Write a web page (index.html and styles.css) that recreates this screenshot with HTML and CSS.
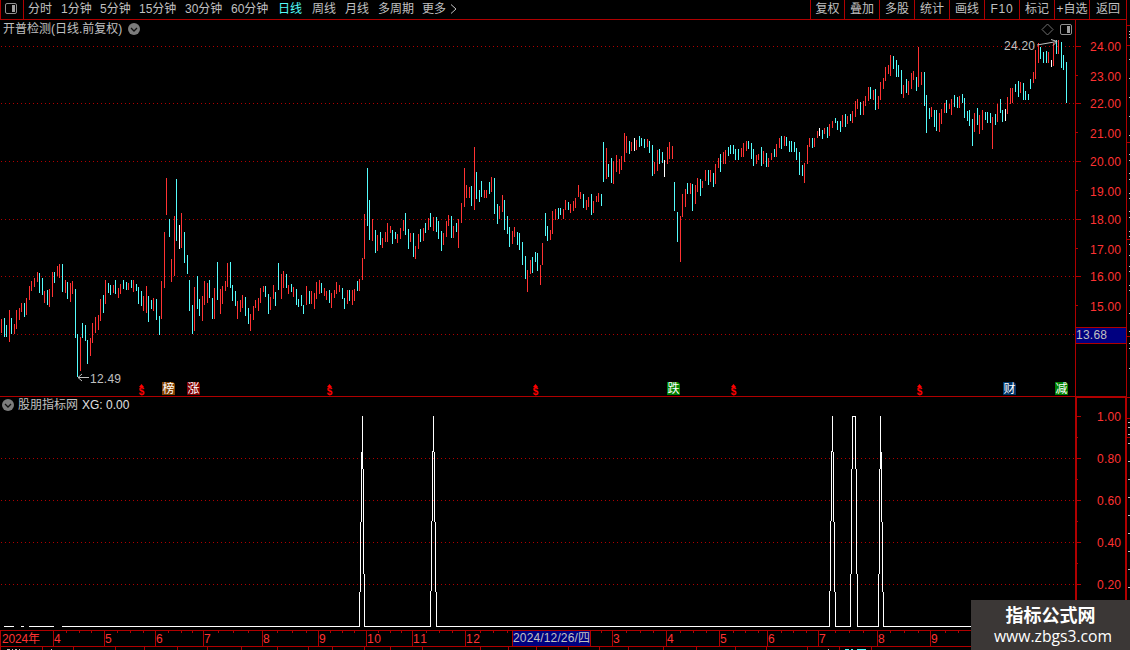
FILE: index.html
```html
<!DOCTYPE html>
<html lang="zh-CN">
<head>
    <meta charset="UTF-8">
    <meta name="viewport" content="width=device-width, initial-scale=1.0">
    <title>开普检测 日线</title>
    <link rel="stylesheet" href="styles.css">
</head>
<body>
    <div class="terminal">
        <div class="toolbar">
            <div class="layout-toggle">
                <svg width="12" height="11" viewBox="0 0 12 11">
                    <rect x="0.5" y="0.5" width="11" height="10" rx="1.5" fill="none" stroke="#909090"/>
                    <rect x="7" y="2" width="3" height="7" fill="#a0a0a0"/>
                </svg>
            </div>
            <div class="periods">
                <span>分时</span>
                <span>1分钟</span>
                <span>5分钟</span>
                <span>15分钟</span>
                <span>30分钟</span>
                <span>60分钟</span>
                <span class="active">日线</span>
                <span>周线</span>
                <span>月线</span>
                <span>多周期</span>
                <span class="more">更多<svg width="7" height="10" viewBox="0 0 7 10"><path d="M1 .5l5 4.5l-5 4.5" fill="none" stroke="#c0c0c0"/></svg></span>
            </div>
            <div class="tools">
                <span>复权</span>
                <span>叠加</span>
                <span>多股</span>
                <span>统计</span>
                <span>画线</span>
                <span class="latin">F10</span>
                <span>标记</span>
                <span>+自选</span>
                <span>返回</span>
            </div>
        </div>

        <div class="panel">
            <svg class="chart" id="price" width="1130" height="376" viewBox="0 20 1130 376"></svg>
            <div class="caption">
                <span>开普检测(日线.前复权)</span>
                <svg width="12" height="12" viewBox="0 0 12 12"><circle cx="6" cy="6" r="6" fill="#7c7c7c"/><path d="M3 5l3 3l3-3" fill="none" stroke="#111" stroke-width="1.3"/></svg>
            </div>
        </div>

        <div class="panel">
            <svg class="chart" id="signal" width="1130" height="234" viewBox="0 396 1130 234"></svg>
            <div class="caption indicator">
                <svg width="12" height="12" viewBox="0 0 12 12"><circle cx="6" cy="6" r="6" fill="#7c7c7c"/><path d="M3 5l3 3l3-3" fill="none" stroke="#111" stroke-width="1.3"/></svg>
                <span>股朋指标网</span>
                <span class="value">XG: 0.00</span>
            </div>
        </div>

        <svg class="chart" id="dates" width="1130" height="20" viewBox="0 630 1130 20"></svg>

        <div class="watermark">
            <div class="site">指标公式网</div>
            <div class="url">www.zbgs3.com</div>
        </div>
    </div>
    <script src="chart.js"></script>
</body>
</html>
```
FILE: styles.css
```css
body {
    margin: 0;
    background-color: #000;
    color: #c0c0c0;
    font-family: "Liberation Sans", "Noto Sans CJK SC", sans-serif;
    font-size: 12px;
    overflow: hidden;
}
.terminal {
    position: relative;
    width: 1130px;
    height: 650px;
    overflow: hidden;
}
.toolbar {
    display: flex;
    box-sizing: border-box;
    width: 1127px;
    height: 20px;
    border-bottom: 1px solid #b00000;
    border-right: 1px solid #b00000;
    line-height: 19px;
    white-space: nowrap;
}
.layout-toggle {
    display: flex;
    align-items: center;
    justify-content: center;
    box-sizing: border-box;
    width: 24px;
    padding: 0 2px 2px 0;
    border-left: 1px solid #b00000;
    border-right: 1px solid #b00000;
}
.periods {
    display: grid;
    grid-template-columns: 33px 39px 39px 46px 46px 47px 34px 33px 33px 44px 40px;
    padding-left: 4px;
    flex: 1;
}
.active {
    color: #54fcfc;
}
.more svg {
    margin-left: 4px;
    vertical-align: -1px;
}
.tools {
    display: grid;
    grid-template-columns: 34px repeat(7, 35px) 37px;
    text-align: center;
}
.tools span {
    border-left: 1px solid #b00000;
}
.latin {
    letter-spacing: 0.8px;
}
.panel {
    position: relative;
}
.chart {
    display: block;
}
.caption {
    position: absolute;
    left: 3px;
    top: 0;
    height: 18px;
    display: flex;
    align-items: center;
    gap: 6px;
    line-height: 16px;
}
.indicator {
    left: 2px;
    gap: 4px;
}
.value {
    color: #e0e0e0;
}
.grid {
    stroke: #b00000;
    stroke-dasharray: 1 3;
}
.frame {
    fill: none;
    stroke: #b00000;
}
.thick {
    stroke-width: 2;
}
.up {
    stroke: #ff3232;
}
.down {
    stroke: #54fcfc;
}
.flat {
    stroke: #fff;
}
.scraps {
    stroke: #c0c0c0;
}
.series {
    fill: none;
    stroke: #fff;
}
.pointer {
    fill: none;
    stroke: #c0c0c0;
}
.label {
    fill: #ff3232;
    font-size: 12px;
}
.note {
    fill: #c0c0c0;
    font-size: 12px;
}
.current {
    fill: #000080;
}
.badge-text {
    fill: #fff;
    font-size: 12px;
    text-anchor: middle;
}
.dollar {
    fill: #ff0000;
    font-size: 10px;
    font-weight: bold;
    text-anchor: middle;
}
.arrow {
    fill: #ff0000;
}
.watermark {
    position: absolute;
    left: 971px;
    top: 600px;
    box-sizing: border-box;
    width: 159px;
    height: 50px;
    padding-left: 5px;
    background-color: #3b3736;
    color: #fff;
    text-align: center;
}
.site {
    padding-right: 5px;
    font: bold 18px/27px "Noto Sans CJK SC", sans-serif;
    padding-top: 1px;
}
.url {
    font: 15.7px/16px "Open Sans", sans-serif;
}
```
FILE: chart.js
```js
// x, high, low of every bar in pixels
const up = `1 319 333,9 310 342,14 324 334,16 310 329,19 308 320,21 303 312,26 298 315,29 286 300,31 281 291,34 278 287,
37 272 282,44 291 303,49 289 307,52 272 297,57 266 276,59 264 278,65 280 293,70 283 302,72 281 294,80 337 371,
90 338 356,92 323 343,95 317 333,98 315 330,100 299 321,105 280 304,113 285 293,118 288 298,120 284 294,128 283 290,
133 280 292,143 296 311,146 286 313,153 298 311,161 281 319,164 232 288,166 178 215,171 259 282,174 216 276,181 213 248,
194 287 331,202 296 321,204 281 305,207 283 303,214 288 319,220 289 314,222 286 304,225 281 291,227 263 287,237 301 319,
240 300 312,242 295 308,250 314 331,253 306 320,255 300 308,258 298 311,260 288 303,263 286 292,270 297 310,273 285 299,
281 274 299,283 271 288,288 285 294,293 287 297,306 286 305,311 291 304,314 293 309,316 282 299,319 280 294,324 288 296,
326 291 300,331 293 308,334 290 298,336 282 294,339 285 292,347 290 304,352 290 305,354 289 301,359 279 291,362 258 280,
364 214 259,372 219 241,377 235 251,382 238 248,385 232 242,387 223 242,390 226 233,397 234 243,400 228 239,403 220 231,
410 233 242,415 246 259,418 234 249,423 228 241,428 218 230,433 217 231,443 233 245,446 221 237,448 215 226,453 226 238,
458 219 248,461 203 223,464 168 207,466 185 198,469 187 198,474 147 210,484 190 198,486 190 198,491 177 192,499 206 219,
502 195 212,512 231 244,514 227 237,527 270 292,530 260 274,540 265 285,542 243 265,550 230 240,552 211 234,555 209 220,
563 209 219,565 200 210,570 204 213,573 201 211,575 198 208,578 185 197,580 192 199,586 200 210,588 197 207,593 201 213,
596 196 202,598 193 202,606 148 179,613 161 184,616 155 172,619 159 174,621 156 170,624 133 162,626 136 153,631 142 151,
636 140 150,647 139 147,654 162 174,657 150 171,667 147 164,669 142 159,672 146 159,680 216 262,682 194 217,685 189 207,
690 183 194,695 185 204,697 178 192,702 181 188,705 170 181,710 170 182,715 164 184,718 158 168,723 152 164,725 150 164,
741 148 157,743 143 157,746 141 151,756 155 164,758 154 160,763 151 164,768 158 167,771 153 160,776 144 157,779 138 148,
784 136 146,804 163 183,807 145 164,809 138 147,814 138 147,817 131 138,824 128 134,829 124 136,832 121 128,842 115 127,
847 116 124,852 111 123,855 101 117,857 99 109,863 101 115,865 96 106,868 87 101,873 90 100,878 96 109,880 82 100,
883 78 89,885 67 81,888 65 74,890 55 76,903 85 98,908 81 95,911 73 89,913 71 80,918 47 87,921 72 85,931 107 117,
939 113 132,941 109 124,944 103 113,949 104 109,951 99 115,959 96 108,974 113 132,979 115 134,982 110 130,992 117 149,
997 104 122,1007 97 114,1010 88 104,1012 88 103,1020 82 93,1033 72 83,1035 50 79,1038 43 63,1048 52 63,1053 43 66,1058 40 54`;

const down = `4 318 337,6 325 337,11 318 334,24 303 317,39 273 293,42 278 295,47 290 305,54 272 283,62 264 292,67 282 299,
75 289 338,77 334 377,82 323 338,85 325 341,87 340 364,103 295 313,108 283 293,110 285 295,115 280 294,123 280 289,
126 282 290,131 280 288,136 284 291,138 287 304,141 291 306,148 296 322,151 300 309,156 299 320,159 316 335,169 219 237,
176 179 241,184 232 263,187 255 274,189 280 311,192 305 334,197 276 309,199 299 316,209 280 298,212 298 319,217 262 300,
230 262 288,232 285 301,235 291 306,245 297 316,248 308 324,265 286 297,268 294 314,275 292 306,278 263 290,286 274 288,
291 284 292,296 289 305,298 299 307,301 295 306,303 305 314,309 291 304,321 283 293,329 290 303,342 288 299,344 298 309,
349 290 301,357 281 291,367 168 226,369 200 240,375 230 253,380 232 245,392 230 244,395 232 239,405 213 235,408 229 249,
413 233 257,420 229 242,425 223 233,430 213 227,436 217 232,438 221 239,441 231 251,451 216 238,456 223 232,471 186 206,
476 172 199,479 190 202,481 181 197,489 182 194,494 178 214,497 204 224,504 200 230,507 216 234,509 227 247,517 232 245,
519 233 250,522 242 265,525 256 279,532 257 273,535 252 262,537 253 271,545 213 236,547 226 241,558 208 219,560 208 215,
568 202 210,583 194 208,591 194 215,601 194 206,603 142 182,608 164 177,611 158 183,629 141 154,639 136 147,641 138 146,
644 139 148,649 141 153,652 145 176,659 149 164,662 152 163,674 182 211,677 212 242,687 183 194,692 184 211,700 179 196,
708 170 185,713 173 187,720 154 172,728 147 156,730 145 154,733 145 154,735 149 160,738 149 160,748 141 149,751 143 159,
753 149 166,761 147 166,766 153 167,774 149 157,781 136 149,786 137 146,789 141 152,791 141 152,794 142 152,796 148 160,
799 152 175,802 165 176,812 138 148,822 130 139,827 127 138,835 118 123,837 121 130,840 121 132,845 114 127,850 114 121,
860 102 115,870 87 99,875 89 110,893 56 69,896 60 77,898 65 77,901 70 94,906 79 93,916 77 91,924 72 106,926 95 133,
929 108 119,934 110 127,936 110 131,946 100 113,954 95 107,957 97 108,962 94 103,964 98 118,967 111 121,969 110 126,
972 119 146,977 108 125,985 112 120,987 112 123,990 113 123,995 114 125,1000 99 113,1002 110 122,1015 84 92,1018 81 97,
1023 83 100,1025 91 100,1028 94 100,1030 79 89,1040 47 59,1043 52 63,1046 51 63,1056 40 54,1061 42 68,1063 55 70,1066 62 103`;

const flat = `179 225 249,634 138 151,664 160 177,819 128 136,1005 109 121,1051 60 67`;

function bars(data, cls) {
    const d = data.split(',').map(item => {
        const [x, high, low] = item.trim().split(' ').map(Number);
        return `M${x + 0.5} ${high}V${low}`;
    }).join('');
    return `<path class="${cls}" d="${d}"/>`;
}

function hline(x1, x2, y, cls) {
    return `<path class="${cls}" d="M${x1} ${y + 0.5}H${x2}"/>`;
}

function vline(x, y1, y2, cls) {
    return `<path class="${cls}" d="M${x + 0.5} ${y1}V${y2}"/>`;
}

function text(x, y, str, cls, width) {
    const fit = width ? ` textLength="${width}"` : '';
    return `<text class="${cls}" x="${x}" y="${y}"${fit}>${str}</text>`;
}

function drawPrice() {
    let out = '';
    [46, 103, 161, 219, 276, 334].forEach(y => {
        out += hline(1, 1075, y, 'grid') + hline(1075, 1081, y, 'frame');
    });
    [75, 132, 190, 248, 305].forEach(y => out += hline(1075, 1078, y, 'frame'));
    out += vline(1075, 20, 396, 'frame') + vline(1126, 20, 396, 'frame');
    [46, 76, 103, 133, 161, 191, 219, 249, 276, 306].forEach((y, i) => {
        out += text(1090, y + 5, (24 - i) + '.00', 'label', 31);
    });

    // current price
    out += '<rect class="current" x="1076" y="327" width="50" height="17"/>';
    out += hline(1076, 1126, 327, 'frame') + hline(1076, 1126, 343, 'frame');
    out += text(1076, 339, '13.68', 'note', 31);

    out += bars(up, 'up') + bars(down, 'down') + bars(flat, 'flat');

    // highest and lowest
    out += text(1004, 50, '24.20', 'note', 31);
    out += '<path class="pointer" d="M1037 45L1057 41.5M1051 39.5l6 2l-4 4"/>';
    out += text(90, 383, '12.49', 'note', 31);
    out += '<path class="pointer" d="M78 377.5H89M82 374l-4 3.5l4 3.5"/>';

    [141.5, 329.5, 535.5, 733.5, 919.5].forEach(x => {
        out += `<path class="arrow" d="M${x - 2.5} 387l2.5-3l2.5 3z"/>` + text(x, 395, '$', 'dollar');
    });
    [[162, '榜', '#804000'], [187, '涨', '#800000'], [667, '跌', '#008000'], [1003, '财', '#003366'], [1055, '减', '#008000']].forEach(([x, str, color]) => {
        out += `<path fill="${color}" d="M${x} 382h11l2 2v11h-13z"/>` + text(x + 6.5, 393, str, 'badge-text');
    });

    out += '<path d="M1042 29.5l5.5-5.5l5.5 5.5l-5.5 5.5z" fill="none" stroke="#707070"/>';
    out += '<rect x="1060.5" y="24.5" width="11" height="10" rx="1.5" fill="none" stroke="#909090"/><rect x="1067" y="26" width="3" height="7" fill="#a0a0a0"/>';

    // edge of the neighbouring panel
    [25, 45, 142, 239, 336].forEach(y => out += hline(1127, 1130, y, 'frame'));
    [31, 34, 37, 59, 78, 97, 116, 135, 154, 160, 173, 179, 193, 198, 211, 217, 231, 236, 244, 255, 266, 271, 285, 290, 313, 331, 343, 348, 368].forEach(y => {
        out += hline(1129, 1130, y, 'scraps');
    });
    document.getElementById('price').innerHTML = out;
}

function drawSignal() {
    let out = hline(0, 1075, 396, 'frame');
    [458, 500, 542, 584].forEach(y => out += hline(1, 1075, y, 'grid'));
    [416, 458, 500, 542, 584].forEach((y, i) => {
        out += hline(1076, 1081, y, 'frame') + hline(1076, 1078, y + 21, 'frame');
        out += text(1097, y + 5, (1 - i * 0.2).toFixed(2), 'label', 24);
    });
    out += '<path class="frame thick" d="M1076 630V397H1126V630"/>';

    [[4, 14], [21, 24], [29, 54], [62, 360], [364, 431], [436, 830], [835, 851], [857, 879], [883, 1075]].forEach(([a, b]) => {
        out += hline(a, b, 626, 'series');
    });
    [433, 832].forEach(x => {
        out += vline(x, 416, 452, 'series');
        out += vline(x - 1, 451, 521, 'series') + vline(x + 1, 452, 522, 'series');
        out += vline(x - 2, 521, 591, 'series') + vline(x + 2, 522, 592, 'series');
        out += vline(x - 3, 591, 627, 'series') + vline(x + 3, 592, 627, 'series');
    });
    out += vline(362, 416, 469, 'series') + vline(361, 452, 522, 'series');
    out += vline(363, 469, 574, 'series') + vline(360, 522, 592, 'series');
    out += vline(364, 574, 627, 'series') + vline(359, 592, 627, 'series');
    out += hline(852, 856, 416, 'series');
    out += vline(852, 416, 469, 'series') + vline(855, 416, 469, 'series');
    out += vline(851, 469, 574, 'series') + vline(856, 469, 574, 'series');
    out += vline(850, 574, 627, 'series') + vline(857, 574, 627, 'series');
    out += vline(880, 416, 469, 'series') + vline(881, 452, 522, 'series');
    out += vline(879, 469, 574, 'series') + vline(882, 522, 592, 'series');
    out += vline(878, 574, 627, 'series') + vline(883, 592, 627, 'series');

    [397, 418, 437].forEach(y => out += hline(1127, 1130, y, 'frame'));
    [422, 427, 434, 443, 461, 479, 497, 515, 533, 551, 569, 587].forEach(y => out += hline(1128, 1130, y, 'scraps'));
    document.getElementById('signal').innerHTML = out;
}

function drawDates() {
    let out = hline(0, 1130, 630, 'frame') + hline(0, 1130, 646, 'frame');
    out += vline(0, 630, 646, 'frame');
    out += text(2, 643, '2024年', 'label', 38);
    [[53, '4'], [104, '5'], [155, '6'], [203, '7'], [262, '8'], [318, '9'], [366, '10'], [412, '11'], [465, '12'],
     [612, '3'], [666, '4'], [719, '5'], [767, '6'], [818, '7'], [877, '8'], [930, '9']].forEach(([x, str]) => {
        out += vline(x, 630, 646, 'frame') + text(x + 1, 643, str, 'label', str.length * 7);
    });
    [66, 79, 91, 117, 130, 143, 168, 181, 192, 218, 233, 248, 277, 292, 306, 330, 342, 354, 378, 390, 401, 426, 439, 452, 480, 493, 507,
     601, 626, 640, 653, 680, 693, 706, 733, 745, 758, 781, 793, 806, 835, 849, 863, 890, 904, 918, 945, 958].forEach(x => {
        out += vline(x, 631, 633, 'frame');
    });
    out += '<rect class="current" x="513" y="631" width="77" height="15"/>';
    out += vline(512, 630, 646, 'frame') + vline(590, 630, 646, 'frame');
    out += text(513, 642, '2024/12/26/四', 'note', 77);

    // top of the strip below
    [0, 42, 73, 115, 144, 177, 207, 241, 277, 308, 332, 364, 390, 422, 480, 508, 536, 568, 599, 628, 663, 696, 735, 766, 807, 839, 871].forEach(x => {
        out += vline(x, 646, 650, 'frame');
    });
    out += '<path class="scraps" d="M7 649.5h3M12 649.5h1M15 649.5h2M19 649.5h1M51 649.5h1M828 649.5h1"/>';
    out += '<path class="down" d="M845 649.5h4M851 649.5h2M857 649.5h9"/>';
    document.getElementById('dates').innerHTML = out;
}

drawPrice();
drawSignal();
drawDates();
```
